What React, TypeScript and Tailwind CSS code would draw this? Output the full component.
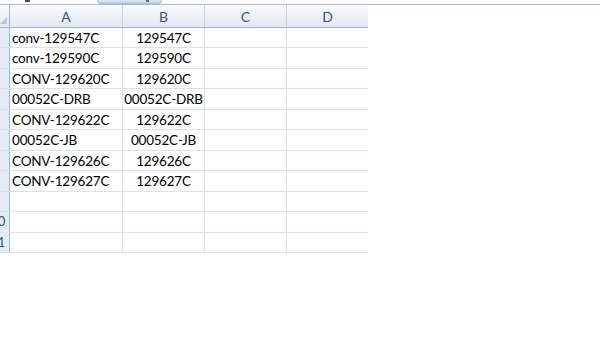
import React from 'react'

const ROWS: [string, string][] = [
  ['conv-129547C', '129547C'],
  ['conv-129590C', '129590C'],
  ['CONV-129620C', '129620C'],
  ['00052C-DRB', '00052C-DRB'],
  ['CONV-129622C', '129622C'],
  ['00052C-JB', '00052C-JB'],
  ['CONV-129626C', '129626C'],
  ['CONV-129627C', '129627C'],
  ['', ''],
  ['', ''],
  ['', ''],
]

const FONT = { fontFamily: 'Lato, "Open Sans", sans-serif' }

export default function App() {
  return (
    <div className="w-[600px] h-[337px] bg-white overflow-hidden relative" style={FONT}>
      {/* strip above the grid */}
      <div className="relative h-[5px] border-b border-[#a9bcd3]">
        <div className="absolute left-[25px] top-0 w-[5px] h-[2px] bg-[#4a4a4a]" />
        <div className="absolute left-[97px] top-0 w-[65px] h-[4px] rounded-b-[6px] bg-gradient-to-b from-[#dce7f5] to-[#c3d4ea] border-x border-b border-[#a9bdd6]">
          <div className="absolute left-[48px] top-0 w-[3px] h-[2px] bg-[#666]" />
        </div>
      </div>

      <div className="flex flex-col w-[368px]">
        {/* column headers */}
        <div className="flex h-[23px] bg-gradient-to-b from-[#f9fbfd] to-[#e1e8f2] border-b border-[#9eb6ce] text-[#3b5373] text-[14px]">
          <div className="w-[10px] shrink-0 border-r border-[#9eb6ce] relative">
            <div className="absolute right-[2px] bottom-[3px] w-0 h-0 border-l-[7px] border-l-transparent border-b-[7px] border-b-[#b6c8de]" />
          </div>
          <div className="w-[113px] shrink-0 flex items-center justify-center pt-[1px] border-r border-[#c5d2e3]">A</div>
          <div className="w-[82px] shrink-0 flex items-center justify-center pt-[1px] border-r border-[#c5d2e3]">B</div>
          <div className="w-[82px] shrink-0 flex items-center justify-center pt-[1px] border-r border-[#c5d2e3]">C</div>
          <div className="w-[81px] shrink-0 flex items-center justify-center pt-[1px]">D</div>
        </div>

        {ROWS.map(([a, b], i) => (
          <div
            key={i}
            className={`flex ${i % 2 === 0 ? 'h-[20px]' : 'h-[21px]'} border-b border-[#dae1ec] text-[13.5px] tracking-[-0.2px] text-black`}
          >
            <div className="w-[10px] shrink-0 overflow-hidden bg-[#e4ecf7] border-r border-[#9eb6ce]">
              <div className="w-[24px] -ml-[19px] h-full flex items-center justify-end text-[#3b5373] text-[13px]">
                {i >= 9 ? i + 1 : ''}
              </div>
            </div>
            <div className="w-[113px] shrink-0 flex items-center pl-[2px] pt-[1px] border-r border-[#dae1ec] whitespace-nowrap">{a}</div>
            <div className="w-[82px] shrink-0 flex items-center justify-center pt-[1px] border-r border-[#dae1ec] whitespace-nowrap">{b}</div>
            <div className="w-[82px] shrink-0 border-r border-[#dae1ec]" />
            <div className="w-[81px] shrink-0" />
          </div>
        ))}
      </div>
    </div>
  )
}
